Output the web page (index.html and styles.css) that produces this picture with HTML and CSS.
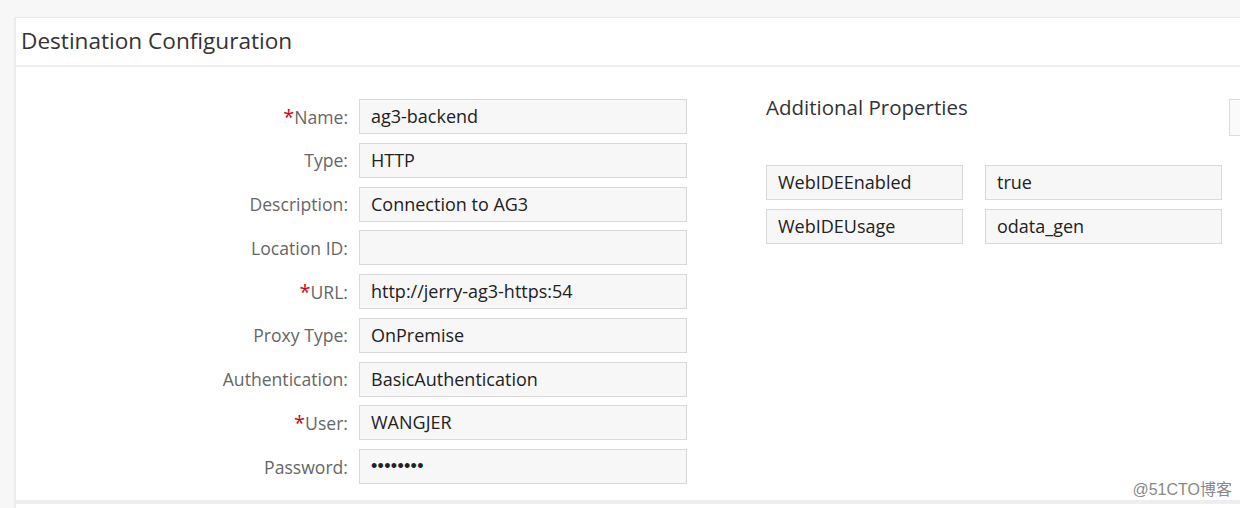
FILE: index.html
```html
<!DOCTYPE html>
<html>
<head>
<meta charset="utf-8">
<link rel="stylesheet" href="styles.css">
</head>
<body>
<div class="page">
  <div class="card">
    <div class="card-header">Destination Configuration</div>
    <div class="card-body">
      <div class="form">
        <label class="lbl"><span class="req">*</span>Name:</label><div class="inp">ag3-backend</div>
        <label class="lbl">Type:</label><div class="inp">HTTP</div>
        <label class="lbl">Description:</label><div class="inp">Connection to AG3</div>
        <label class="lbl">Location ID:</label><div class="inp"></div>
        <label class="lbl"><span class="req">*</span>URL:</label><div class="inp">http://jerry-ag3-https:54</div>
        <label class="lbl">Proxy Type:</label><div class="inp">OnPremise</div>
        <label class="lbl">Authentication:</label><div class="inp">BasicAuthentication</div>
        <label class="lbl"><span class="req">*</span>User:</label><div class="inp">WANGJER</div>
        <label class="lbl">Password:</label><div class="inp pwd">••••••••</div>
      </div>
      <div class="props">
        <div class="props-head">
          <h2 class="props-title">Additional Properties</h2>
          <div class="btn-stub"></div>
        </div>
        <div class="props-grid">
          <div class="inp prop">WebIDEEnabled</div><div class="inp prop">true</div>
          <div class="inp prop">WebIDEUsage</div><div class="inp prop">odata_gen</div>
        </div>
      </div>
    </div>
    <div class="card-footer"></div>
  </div>
  <div class="watermark">@51CTO博客</div>
</div>
</body>
</html>
```
FILE: styles.css
```css
html, body {
  margin: 0;
  padding: 0;
}
body {
  width: 1240px;
  height: 508px;
  overflow: hidden;
  background: #f7f7f7;
  font-family: "Open Sans", "Noto Sans", sans-serif;
  color: #333;
}
.page {
  position: relative;
  padding: 17px 0 0 14px;
  height: 491px;
}
.card {
  background: #fff;
  border-top: 1px solid #e8e8e8;
  border-left: 2px solid #ececec;
  height: 490px;
  display: flex;
  flex-direction: column;
}
.card-header {
  height: 47px;
  line-height: 45px;
  padding-left: 5px;
  font-size: 22.6px;
  color: #333;
  border-bottom: 2px solid #eeeeee;
}
.card-body {
  display: flex;
  padding-top: 32px;
  flex: 1;
}
.form {
  display: grid;
  grid-template-columns: 332px 328px;
  grid-auto-rows: 35px;
  column-gap: 11px;
  row-gap: 8.75px;
  align-items: center;
}
.lbl {
  text-align: right;
  font-size: 17.6px;
  line-height: 20px;
  color: #666;
}
.req {
  color: #d0021b;
  font-size: 20px;
  line-height: 1;
}
.inp {
  box-sizing: border-box;
  height: 35px;
  line-height: 33px;
  padding-left: 11px;
  background: #f7f7f7;
  border: 1px solid #d9d9d9;
  font-size: 18px;
  color: #222;
  white-space: nowrap;
  overflow: hidden;
}
.pwd {
  font-family: "Liberation Sans", sans-serif;
  letter-spacing: 0.3px;
  font-size: 18px;
}
.props {
  margin-left: 79px;
  flex: 1;
}
.props-head {
  display: flex;
  justify-content: space-between;
  align-items: flex-start;
  height: 66px;
}
.props-title {
  margin: -1px 0 0 0;
  font-weight: normal;
  font-size: 20.5px;
  color: #333;
  line-height: 18px;
}
.btn-stub {
  width: 10px;
  height: 35px;
  border: 1px solid #dcdcdc;
  border-right: none;
  background: #fafafa;
}
.props-grid {
  display: grid;
  grid-template-columns: 197px 237px;
  column-gap: 22px;
  row-gap: 9px;
}
.prop {
  height: 35px;
}
.card-footer {
  height: 4px;
  background: #eeeeee;
  margin-bottom: 4px;
}
.watermark {
  position: absolute;
  right: 8px;
  bottom: 8px;
  font-size: 16px;
  color: #888;
  font-family: "Liberation Sans", "Noto Sans CJK SC", sans-serif;
}
```
